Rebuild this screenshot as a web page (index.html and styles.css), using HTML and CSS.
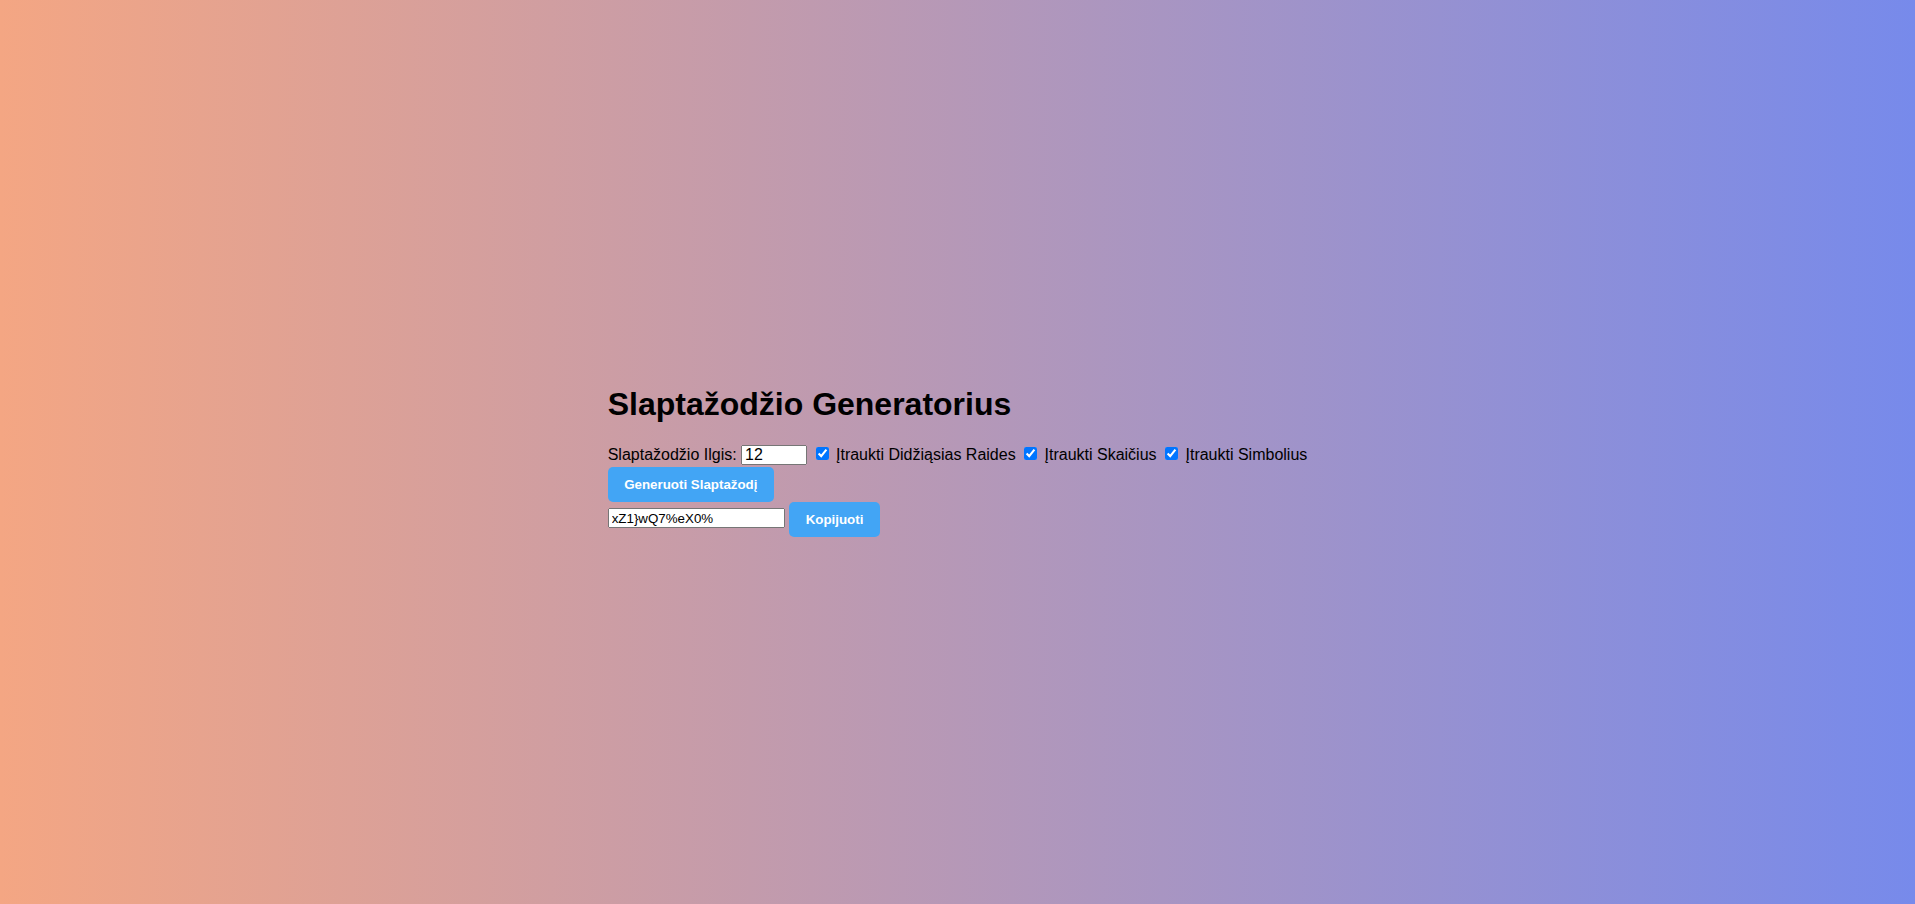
FILE: index.html
```html
<!DOCTYPE html>
<html lang="lt">
<head>
<meta charset="UTF-8">
<title>Slaptažodžio Generatorius</title>
<link rel="stylesheet" href="styles.css">
</head>
<body>
<div class="container">
  <h1>Slaptažodžio Generatorius</h1>
  <div class="options">
    <label for="length">Slaptažodžio Ilgis:</label>
    <input type="number" id="length" class="length" value="12" min="4" max="64">
    <input type="checkbox" id="upper" checked>
    <label for="upper">Įtraukti Didžiąsias Raides</label>
    <input type="checkbox" id="numbers" checked>
    <label for="numbers">Įtraukti Skaičius</label>
    <input type="checkbox" id="symbols" checked>
    <label for="symbols">Įtraukti Simbolius</label>
  </div>
  <div class="row">
    <button class="btn">Generuoti Slaptažodį</button>
  </div>
  <div class="row">
    <input type="text" class="output" value="xZ1}wQ7%eX0%" readonly>
    <button class="btn">Kopijuoti</button>
  </div>
</div>
</body>
</html>
```
FILE: styles.css
```css
html, body {
  margin: 0;
  padding: 0;
  height: 100%;
}
body {
  font-family: "Liberation Sans", Arial, sans-serif;
  font-size: 16px;
  color: #000;
  background: linear-gradient(to right, #f4a683, #778aeb);
  display: flex;
  justify-content: center;
  align-items: center;
  min-height: 100vh;
}
.container {
  display: block;
}
h1 {
  font-size: 32px;
  font-weight: bold;
  margin: 19px 0 21px;
}
.options {
  white-space: nowrap;
  padding-bottom: 2px;
}
input, button {
  font-family: "Liberation Sans", Arial, sans-serif;
  font-size: 13.333px;
}
.length {
  font-size: 16px;
  box-sizing: border-box;
  width: 66px;
  height: 20.5px;
  padding: 0 2px;
}
.output {
  box-sizing: border-box;
  width: 177px;
  height: 20px;
  padding: 0 2px;
  vertical-align: 1.5px;
}
.btn {
  background: #42a5f5;
  color: #fff;
  border: none;
  border-radius: 5px;
  padding: 10px 16.5px;
  font-weight: bold;
  cursor: pointer;
}
```
